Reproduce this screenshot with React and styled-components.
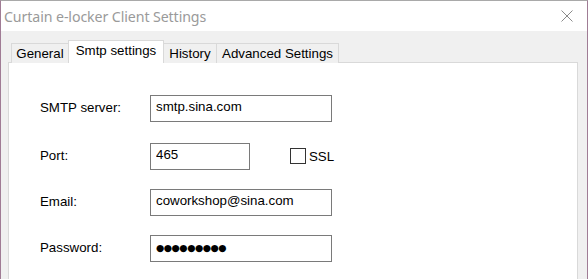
import React from "react";
import styled, { createGlobalStyle } from "styled-components";

const Global = createGlobalStyle`
  html, body { margin: 0; padding: 0; background: #f0f0f0; }
  body { font-family: "Liberation Sans", Arial, sans-serif; }
`;

const Window = styled.div`
  width: 588px;
  height: 279px;
  box-sizing: border-box;
  border-top: 1px solid #a9a9a9;
  border-left: 1px solid #a07c95;
  border-right: 1px solid #a07c95;
  display: flex;
  flex-direction: column;
  overflow: hidden;
  background: #f0f0f0;
`;

const TitleBar = styled.div`
  height: 30px;
  flex: none;
  background: #ffffff;
  display: flex;
  align-items: center;
  justify-content: space-between;
  padding: 0 14px 0 3px;
`;

const Title = styled.span`
  font-family: "Noto Sans", "Open Sans", sans-serif;
  font-size: 14.2px;
  color: #9a9a9a;
  letter-spacing: -0.1px;
  margin-top: 1px;
`;

const CloseIcon = styled.svg`
  width: 12px;
  height: 12px;
  display: block;
`;

const Body = styled.div`
  flex: 1;
  padding: 9px 9px 0 7px;
  display: flex;
  flex-direction: column;
`;

const TabStrip = styled.div`
  display: flex;
  align-items: flex-end;
  margin-left: 3px;
  height: 23px;
  margin-bottom: -1px;
  position: relative;
  z-index: 1;
`;

const Tab = styled.div`
  box-sizing: border-box;
  width: ${(p) => p.$w}px;
  height: ${(p) => (p.$active ? 23 : 20)}px;
  margin-left: ${(p) => (p.$first ? 0 : -1)}px;
  border: 1px solid #d9d9d9;
  border-bottom: none;
  background: ${(p) => (p.$active ? "#ffffff" : "#f0f0f0")};
  position: relative;
  z-index: ${(p) => (p.$active ? 2 : 1)};
  font-size: 13.3px;
  line-height: 15px;
  color: #000;
  text-align: center;
  padding-top: 2px;
  white-space: nowrap;
`;

const Panel = styled.div`
  flex: 1;
  background: #ffffff;
  border: 1px solid #d9d9d9;
  border-bottom: none;
  padding: 32px 0 0 31px;
  display: flex;
  flex-direction: column;
`;

const Row = styled.div`
  display: flex;
  align-items: flex-start;
  height: 27px;
  margin-top: ${(p) => p.$mt || 0}px;
`;

const Label = styled.div`
  width: 110px;
  font-size: 13.3px;
  line-height: 15px;
  padding-top: 5px;
  color: #000;
`;

const Field = styled.input`
  box-sizing: border-box;
  width: ${(p) => p.$w}px;
  height: 27px;
  margin: 0;
  border: 1px solid #7a7a7a;
  border-radius: 0;
  padding: 0 5px 4px 5px;
  font-family: "Liberation Sans", Arial, sans-serif;
  font-size: 13.3px;
  color: #000;
  background: #fff;
  outline: none;
`;

const Secret = styled(Field)`
  font-family: "DejaVu Sans", sans-serif;
  font-size: 9.5px;
  letter-spacing: -0.5px;
  padding: 0 4px 3px 5px;
`;

const Check = styled.label`
  display: flex;
  align-items: center;
  margin-left: 40px;
  margin-top: 5px;
  font-size: 13.3px;
  line-height: 15px;
  color: #000;
`;

const Box = styled.span`
  box-sizing: border-box;
  width: 16px;
  height: 16px;
  border: 1px solid #333333;
  background: #fff;
  margin-right: 3px;
`;

export default function App() {
  return (
    <>
      <Global />
      <Window>
        <TitleBar>
          <Title>Curtain e-locker Client Settings</Title>
          <CloseIcon viewBox="0 0 12 12">
            <path d="M0.5 0.5 L11.5 11.5 M11.5 0.5 L0.5 11.5" stroke="#8a8a8a" strokeWidth="1" fill="none" />
          </CloseIcon>
        </TitleBar>
        <Body>
          <TabStrip>
            <Tab $w={58} $first>General</Tab>
            <Tab $w={96} $active>Smtp settings</Tab>
            <Tab $w={54}>History</Tab>
            <Tab $w={123}>Advanced Settings</Tab>
          </TabStrip>
          <Panel>
            <Row>
              <Label>SMTP server:</Label>
              <Field $w={182} readOnly value="smtp.sina.com" />
            </Row>
            <Row $mt={21}>
              <Label>Port:</Label>
              <Field $w={100} readOnly value="465" />
              <Check>
                <Box />
                SSL
              </Check>
            </Row>
            <Row $mt={19}>
              <Label>Email:</Label>
              <Field $w={182} readOnly value="coworkshop@sina.com" />
            </Row>
            <Row $mt={19}>
              <Label>Password:</Label>
              <Secret $w={182} readOnly value="●●●●●●●●●" />
            </Row>
          </Panel>
        </Body>
      </Window>
    </>
  );
}
